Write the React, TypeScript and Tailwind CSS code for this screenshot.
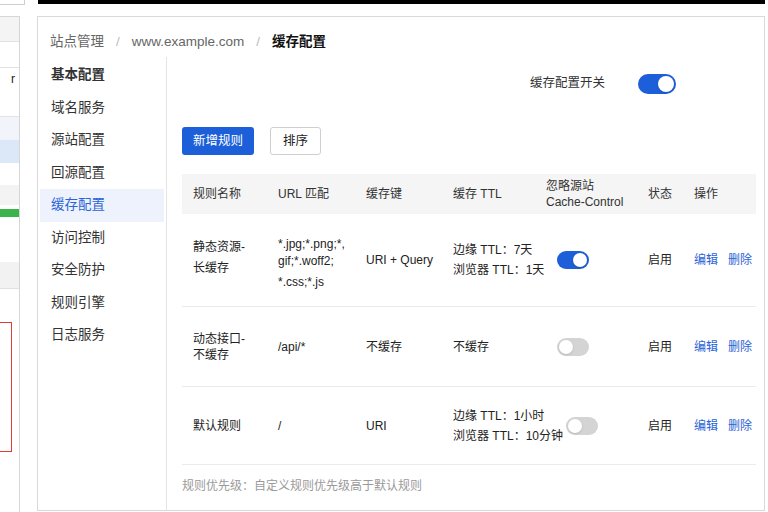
import React from "react";

const font = {
  fontFamily: '"Liberation Sans", "Noto Sans CJK SC", sans-serif',
};

function Toggle({ on, size = "sm" }: { on: boolean; size?: "sm" | "lg" }) {
  const box = size === "lg" ? "w-[38px] h-[20px]" : "w-[32px] h-[18px]";
  const knob = size === "lg" ? "w-[16px] h-[16px]" : "w-[14px] h-[14px]";
  return (
    <div
      className={`${box} rounded-full p-[2px] flex ${
        on ? "bg-[#1d5fd8] justify-end" : "bg-[#d4d4d4] justify-start"
      }`}
    >
      <div className={`${knob} rounded-full bg-white shadow-sm`} />
    </div>
  );
}

const menu = [
  "基本配置",
  "域名服务",
  "源站配置",
  "回源配置",
  "缓存配置",
  "访问控制",
  "安全防护",
  "规则引擎",
  "日志服务",
];

const cols = "grid grid-cols-[85px_88px_87px_93px_102px_46px_1fr]";

function Actions() {
  return (
    <div className="pl-[11px] flex gap-[10px] whitespace-nowrap text-[#2a63d6]">
      <span>编辑</span>
      <span>删除</span>
    </div>
  );
}

export default function App() {
  return (
    <div className="w-[768px] h-[512px] overflow-hidden bg-white text-[#222]" style={font}>
      {/* top strip */}
      <div className="flex h-[5px]">
        <div className="w-[25px] border-r border-b border-[#cfcfcf] bg-white" />
        <div className="ml-[13px] w-[727px] h-[4px] bg-black" />
      </div>

      <div className="flex mt-[11px]">
        {/* window behind, left edge */}
        <div className="w-[20px] h-[496px] border-t border-r border-[#d6d6d6] flex flex-col text-[12px]">
          <div className="h-[25px] bg-[#f4f4f4] border-b border-[#e2e2e2]" />
          <div className="h-[26px] border-b border-[#e2e2e2]" />
          <div className="h-[49px] border-b border-[#e2e2e2] pt-[4px] text-right pr-[4px] leading-[14px]">r</div>
          <div className="h-[23px] bg-[#f1f4fa]" />
          <div className="h-[23px] bg-[#dce7f8]" />
          <div className="h-[22px]" />
          <div className="h-[20px] bg-[#f3f3f3]" />
          <div className="h-[4px]" />
          <div className="h-[8px] bg-[#3bb54a]" />
          <div className="h-[45px]" />
          <div className="h-[27px] bg-[#f2f2f2] border-b border-[#e0e0e0]" />
          <div className="h-[33px]" />
          <div className="h-[130px] w-[12px] border border-l-0 border-[#e53935]" />
        </div>

        {/* main card */}
        <div className="ml-[17px] w-[728px] h-[495px] border border-[#d9d9d9] bg-white flex flex-col">
          <div className="h-[40px] flex items-end pb-[5px] pl-[12px] text-[13.5px] text-[#666]">
            <span>站点管理</span>
            <span className="mx-[12px] text-[#bbb]">/</span>
            <span>www.example.com</span>
            <span className="mx-[12px] text-[#bbb]">/</span>
            <span className="font-bold text-[#111]">缓存配置</span>
          </div>

          <div className="flex flex-1">
            <div className="w-[129px] border-r border-[#e4e4e4] pt-[2px] px-[2px] text-[13.5px]">
              {menu.map((m, i) => (
                <div
                  key={m}
                  className={`h-[32.5px] flex items-center pl-[11px] ${
                    i === 0 ? "font-bold text-[#111]" : ""
                  } ${i === 4 ? "bg-[#edf2fc] text-[#2b63d8]" : "text-[#333]"}`}
                >
                  {m}
                </div>
              ))}
            </div>

            <div className="flex-1 pl-[15px] pr-[8px] text-[12px]">
              <div className="h-[37px] mt-[8px] flex items-center justify-end pr-[80px] gap-[33px] text-[#333]">
                <span className="text-[12.5px]">缓存配置开关</span>
                <Toggle on size="lg" />
              </div>

              <div className="mt-[25px] flex gap-[16px]">
                <div className="w-[72px] h-[28px] rounded-[3px] bg-[#1c5fd9] text-white flex items-center justify-center text-[12.5px]">
                  新增规则
                </div>
                <div className="w-[51px] h-[28px] rounded-[3px] border border-[#cfcfcf] bg-white flex items-center justify-center text-[12.5px]">
                  排序
                </div>
              </div>

              <div className="mt-[19px]">
                <div className={`${cols} h-[40px] items-center bg-[#f5f5f5] text-[#333] leading-[16px]`}>
                  <div className="px-[11px]">规则名称</div>
                  <div className="px-[11px]">URL 匹配</div>
                  <div className="px-[11px]">缓存键</div>
                  <div className="px-[11px]">缓存 TTL</div>
                  <div className="px-[11px]">
                    忽略源站
                    <br />
                    Cache-Control
                  </div>
                  <div className="px-[11px]">状态</div>
                  <div className="px-[11px]">操作</div>
                </div>

                <div className={`${cols} h-[93px] items-center border-b border-[#ebebeb]`}>
                  <div className="px-[11px] leading-[21px] mt-[-5px]">
                    静态资源-
                    <br />
                    长缓存
                  </div>
                  <div className="px-[11px] mt-[6px]">
                    <div className="leading-[17px]">
                      *.jpg;*.png;*,
                      <br />
                      gif;*.woff2;
                    </div>
                    <div className="leading-[17px] mt-[4px]">*.css;*.js</div>
                  </div>
                  <div className="px-[11px] whitespace-nowrap">URI + Query</div>
                  <div className="px-[11px] leading-[20px] whitespace-nowrap">
                    边缘 TTL：7天
                    <br />
                    浏览器 TTL：1天
                  </div>
                  <div className="pl-[22px] flex">
                    <Toggle on />
                  </div>
                  <div className="px-[11px]">启用</div>
                  <Actions />
                </div>

                <div className={`${cols} h-[80px] items-center border-b border-[#ebebeb]`}>
                  <div className="px-[11px] leading-[16px]">
                    动态接口-
                    <br />
                    不缓存
                  </div>
                  <div className="px-[11px]">/api/*</div>
                  <div className="px-[11px]">不缓存</div>
                  <div className="px-[11px]">不缓存</div>
                  <div className="pl-[22px] flex">
                    <Toggle on={false} />
                  </div>
                  <div className="px-[11px]">启用</div>
                  <Actions />
                </div>

                <div className={`${cols} h-[78px] items-center border-b border-[#ebebeb]`}>
                  <div className="px-[11px]">默认规则</div>
                  <div className="px-[11px]">/</div>
                  <div className="px-[11px]">URI</div>
                  <div className="px-[11px] leading-[20px] whitespace-nowrap">
                    边缘 TTL：1小时
                    <br />
                    浏览器 TTL：10分钟
                  </div>
                  <div className="pl-[31px] flex">
                    <Toggle on={false} />
                  </div>
                  <div className="px-[11px]">启用</div>
                  <Actions />
                </div>
              </div>

              <div className="mt-[12px] text-[#9a9a9a]">规则优先级：自定义规则优先级高于默认规则</div>
            </div>
          </div>
        </div>
      </div>
    </div>
  );
}
